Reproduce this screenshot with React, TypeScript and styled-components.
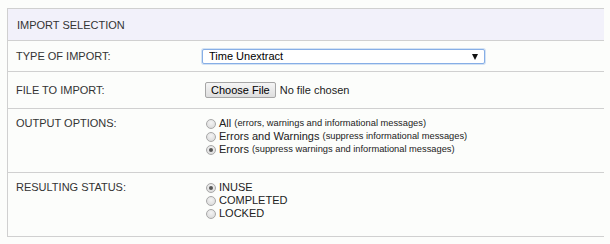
import React, { useState } from 'react';
import styled, { createGlobalStyle } from 'styled-components';

const Global = createGlobalStyle`
  body {
    margin: 8px 6px 8px 7px;
    background: #fcfdfb;
    font-family: 'Liberation Sans', Arial, sans-serif;
    color: #333;
  }
  * { box-sizing: border-box; }
`;

export default function App() {
  const [output, setOutput] = useState('errors');
  const [status, setStatus] = useState('INUSE');

  const outputOptions = [
    { id: 'all', label: 'All', note: '(errors, warnings and informational messages)' },
    { id: 'warn', label: 'Errors and Warnings', note: '(suppress informational messages)' },
    { id: 'errors', label: 'Errors', note: '(suppress warnings and informational messages)' },
  ];
  const statuses = ['INUSE', 'COMPLETED', 'LOCKED'];

  return (
    <>
      <Global />
      <Panel>
        <Header>IMPORT SELECTION</Header>
        <Row $h={30} $center>
          <Label>TYPE OF IMPORT:</Label>
          <SelectWrap>
            <Select defaultValue="Time Unextract">
              <option>Time Unextract</option>
              <option>Time Extract</option>
            </Select>
            <Arrow />
          </SelectWrap>
        </Row>
        <Row $h={36} $center>
          <Label>FILE TO IMPORT:</Label>
          <FileField>
            <FileButton type="button">Choose File</FileButton>
            <span>No file chosen</span>
          </FileField>
        </Row>
        <Row $h={63}>
          <Label>OUTPUT OPTIONS:</Label>
          <RadioList>
            {outputOptions.map((o) => (
              <RadioLine key={o.id}>
                <Radio
                  type="radio"
                  name="output"
                  checked={output === o.id}
                  onChange={() => setOutput(o.id)}
                />
                {o.label} <Note>{o.note}</Note>
              </RadioLine>
            ))}
          </RadioList>
        </Row>
        <Row $h={63}>
          <Label>RESULTING STATUS:</Label>
          <RadioList>
            {statuses.map((s) => (
              <RadioLine key={s}>
                <Radio
                  type="radio"
                  name="status"
                  checked={status === s}
                  onChange={() => setStatus(s)}
                />
                {s}
              </RadioLine>
            ))}
          </RadioList>
        </Row>
      </Panel>
    </>
  );
}

const Panel = styled.div`
  width: 598px;
  border: 1px solid #d0d0d0;
  border-bottom: none;
  font-size: 11px;
`;
const Header = styled.div`
  height: 32px;
  display: flex;
  align-items: center;
  padding-left: 9px;
  background: #f2f1fa;
  border-bottom: 1px solid #d0d0d0;
  color: #333;
`;
const Row = styled.div<{ $h: number; $center?: boolean }>`
  display: grid;
  grid-template-columns: 186px 1fr;
  height: ${(p) => p.$h + 1}px;
  align-items: ${(p) => (p.$center ? 'center' : 'start')};
  padding-left: 8px;
  padding-top: ${(p) => (p.$center ? 0 : 8)}px;
  border-bottom: 1px solid #d0d0d0;
  line-height: 13px;
`;
const Label = styled.div`
  color: #333;
`;
const SelectWrap = styled.div`
  position: relative;
  width: 283px;
  height: 15px;
`;
const Select = styled.select`
  appearance: none;
  width: 100%;
  height: 15px;
  margin: 0;
  padding: 0 0 0 6px;
  border: 1px solid #86aee6;
  border-radius: 2px;
  background: #fff;
  font-family: 'Liberation Sans', Arial, sans-serif;
  font-size: 11px;
  line-height: 13px;
  color: #000;
  outline: none;
  box-shadow: 0 0 0 1px rgba(134, 174, 230, 0.35);
`;
const Arrow = styled.span`
  position: absolute;
  right: 7px;
  top: 5px;
  width: 0;
  height: 0;
  border-left: 3.5px solid transparent;
  border-right: 3.5px solid transparent;
  border-top: 6px solid #111;
  pointer-events: none;
`;
const FileField = styled.div`
  display: flex;
  align-items: center;
  gap: 4px;
  padding-left: 3px;
  color: #222;
`;
const FileButton = styled.button`
  height: 16px;
  padding: 0 5px;
  margin: 0;
  border: 1px solid #a6a6a6;
  border-radius: 2px;
  background: linear-gradient(#f5f5f5, #dedede);
  font-family: 'Liberation Sans', Arial, sans-serif;
  font-size: 11px;
  line-height: 14px;
  color: #000;
`;
const RadioList = styled.div`
  display: flex;
  flex-direction: column;
  padding-left: 4px;
`;
const RadioLine = styled.label`
  display: flex;
  align-items: center;
  height: 13px;
  white-space: pre;
  color: #222;
`;
const Note = styled.span`
  font-size: 9.3px;
`;
const Radio = styled.input`
  appearance: none;
  width: 10px;
  height: 10px;
  margin: 0 3px 0 0;
  border: 1px solid #a8a8a8;
  border-radius: 50%;
  background: radial-gradient(circle at 50% 35%, #f4f4f4, #d6d6d6);
  position: relative;
  &:checked::after {
    content: '';
    position: absolute;
    left: 2px;
    top: 2px;
    width: 4px;
    height: 4px;
    border-radius: 50%;
    background: #555;
  }
`;
